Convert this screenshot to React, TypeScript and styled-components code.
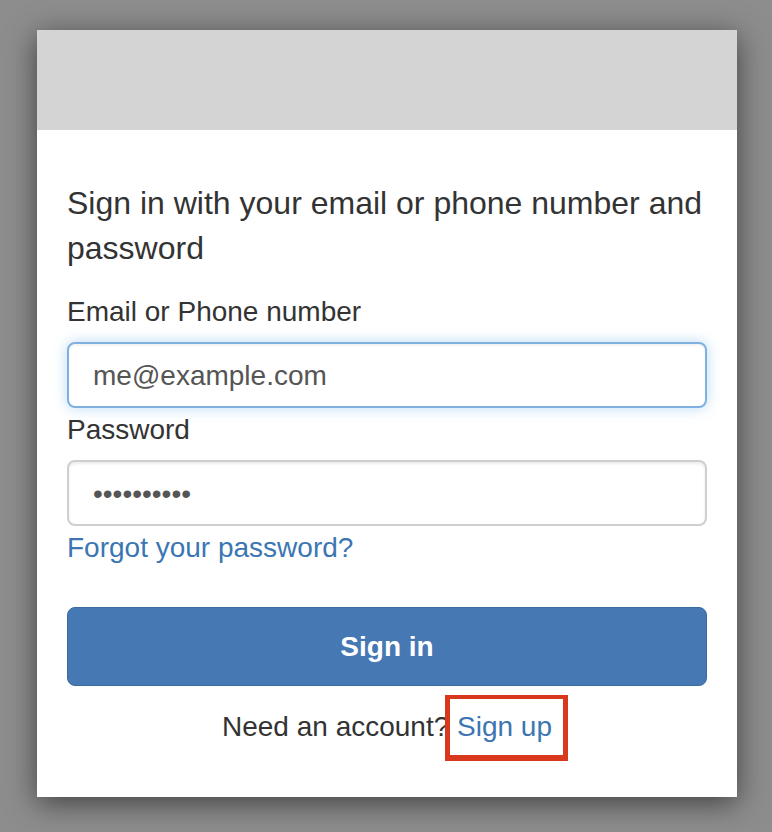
import React from "react";
import styled, { createGlobalStyle } from "styled-components";

const GlobalStyle = createGlobalStyle`
  html, body {
    margin: 0;
    padding: 0;
    background: #8d8d8d;
  }
  body {
    font-family: "Liberation Sans", Arial, Helvetica, sans-serif;
    color: #333;
  }
`;

const Page = styled.div`
  width: 772px;
  height: 832px;
  padding: 30px 0 0 37px;
  box-sizing: border-box;
  overflow: hidden;
`;

const Card = styled.div`
  width: 700px;
  background: #fff;
  box-shadow: 0 6px 28px rgba(0, 0, 0, 0.55);
`;

const Banner = styled.div`
  height: 100px;
  background: #d4d4d4;
`;

const Body = styled.div`
  display: flex;
  flex-direction: column;
  padding: 51px 30px 50px;
`;

const Heading = styled.h1`
  margin: 0;
  font-size: 32px;
  line-height: 45px;
  font-weight: 400;
  color: #333;
`;

const Label = styled.label<{ $top: number }>`
  margin-top: ${(p) => p.$top}px;
  font-size: 28px;
  line-height: 40px;
  color: #333;
`;

const Field = styled.input<{ $focused?: boolean }>`
  margin-top: 10px;
  height: 66px;
  box-sizing: border-box;
  padding: 2px 24px 0;
  border-radius: 8px;
  font-family: "Liberation Sans", Arial, sans-serif;
  font-size: 28px;
  color: #555;
  background: #fff;
  outline: none;
  border: 2px solid ${(p) => (p.$focused ? "#7fb0e0" : "#cfcfcf")};
  box-shadow: ${(p) =>
    p.$focused
      ? "inset 0 2px 2px rgba(0,0,0,0.05), 0 0 14px rgba(102,175,233,0.45)"
      : "inset 0 2px 3px rgba(0,0,0,0.08)"};
`;

const Link = styled.a`
  color: #3b76b3;
  text-decoration: none;
  font-size: 28px;
  line-height: 40px;
`;

const ForgotLink = styled(Link)`
  margin-top: 2px;
  align-self: flex-start;
`;

const SubmitButton = styled.button`
  margin-top: 39px;
  height: 79px;
  border: 1px solid #3b6a9f;
  border-radius: 8px;
  background: #4679b3;
  color: #fff;
  font-family: "Liberation Sans", Arial, sans-serif;
  font-size: 28px;
  font-weight: 700;
  cursor: pointer;
`;

const Footer = styled.p`
  margin: 21px 0 0;
  font-size: 28px;
  line-height: 40px;
  text-align: center;
  color: #333;
`;

/* hand-drawn red annotation round the sign-up link */
const Marked = styled.span`
  position: relative;

  &::after {
    content: "";
    position: absolute;
    left: -12px;
    right: -16px;
    top: -16px;
    bottom: -19px;
    border-style: solid;
    border-color: #d8391c;
    border-width: 4px 5px 6px 5px;
  }
`;

export default function App() {
  return (
    <>
      <GlobalStyle />
      <Page>
        <Card>
          <Banner />
          <Body>
            <Heading>Sign in with your email or phone number and password</Heading>
            <Label $top={21} htmlFor="email">Email or Phone number</Label>
            <Field id="email" $focused type="text" value="me@example.com" readOnly />
            <Label $top={2} htmlFor="password">Password</Label>
            <Field id="password" type="password" value="0123456789" readOnly />
            <ForgotLink href="#">Forgot your password?</ForgotLink>
            <SubmitButton type="button">Sign in</SubmitButton>
            <Footer>
              Need an account?{" "}
              <Marked>
                <Link href="#">Sign up</Link>
              </Marked>
            </Footer>
          </Body>
        </Card>
      </Page>
    </>
  );
}
